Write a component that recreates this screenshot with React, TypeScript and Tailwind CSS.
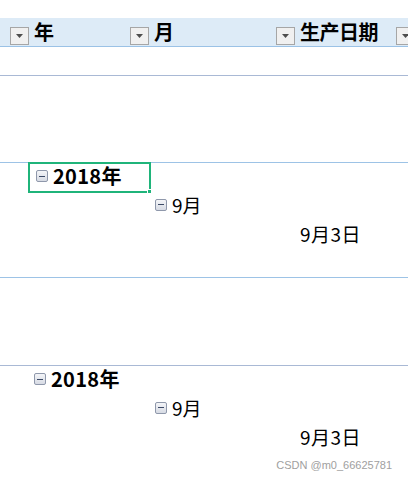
import React from "react";

const cjk = "font-['Microsoft_YaHei','Noto_Sans_CJK_SC',sans-serif]";

const FilterButton = () => (
  <span className="flex h-[18px] w-[19px] shrink-0 items-center justify-center border border-[#a6a6a6] bg-[#f0f0f0]">
    <svg width="7" height="4" viewBox="0 0 7 4">
      <path d="M0 0h7L3.5 4z" fill="#4d4d4d" />
    </svg>
  </span>
);

const Minus = () => (
  <span className="flex h-[12px] w-[12px] shrink-0 items-center justify-center rounded-[2px] border border-[#8f98ab] bg-gradient-to-b from-[#f4f5f8] to-[#d7dbe4]">
    <span className="h-px w-[6px] bg-[#3c4a66]" />
  </span>
);

const HeaderCell = ({ label, width }: { label: string; width: string }) => (
  <div className={`flex shrink-0 items-end gap-[5px] pb-px ${width}`}>
    <FilterButton />
    <span className="mb-[2px] text-[20px] font-bold leading-[22px] tracking-[-0.5px] text-black">{label}</span>
  </div>
);

const Group = ({ selected }: { selected?: boolean }) => (
  <div>
    <div className="flex h-[29px]">
      <div
        className={`ml-[28px] flex w-[123px] items-center gap-[5px] pb-[3px] pl-[6px] ${
          selected ? "relative -mt-px h-[31px] shrink-0 border-2 border-[#1fb47a]" : ""
        }`}
      >
        <Minus />
        <span className="text-[20px] font-bold leading-none tracking-[0.3px] text-black">2018年</span>
        {selected && (
          <span className="absolute -bottom-[3px] -right-[3px] h-[5px] w-[5px] border border-white bg-[#1fb47a]" />
        )}
      </div>
    </div>
    <div className="flex h-[29px] items-center gap-[5px] pb-[4px] pl-[155px]">
      <Minus />
      <span className="text-[19px] leading-none text-black">9月</span>
    </div>
    <div className="flex h-[29px] items-center pb-[4px] pl-[300px]">
      <span className="text-[19px] leading-none tracking-[0.5px] text-black">9月3日</span>
    </div>
  </div>
);

export default function App() {
  return (
    <div className={`h-[479px] w-[408px] overflow-hidden bg-white ${cjk}`}>
      <div className="h-[18px]" />
      <div className="flex h-[29px] overflow-hidden border-b border-[#9bc2e6] bg-[#ddebf7] pl-[10px]">
        <HeaderCell label="年" width="w-[120px]" />
        <HeaderCell label="月" width="w-[146px]" />
        <HeaderCell label="生产日期" width="w-[120px]" />
        <div className="flex shrink-0 items-end pb-px">
          <FilterButton />
        </div>
      </div>
      <div className="h-[29px] border-b border-[#a9b9d5]" />
      <div className="h-[87px] border-b border-[#9dc3e6]" />
      <div className="h-[115px] border-b border-[#9dc3e6]">
        <Group selected />
      </div>
      <div className="h-[88px] border-b border-[#a9b9d5]" />
      <Group />
      <div className="flex justify-end pr-[16px] pt-[4px]">
        <span className="font-['Liberation_Sans',sans-serif] text-[11px] text-[#a0a0a0]">
          CSDN @m0_66625781
        </span>
      </div>
    </div>
  );
}
